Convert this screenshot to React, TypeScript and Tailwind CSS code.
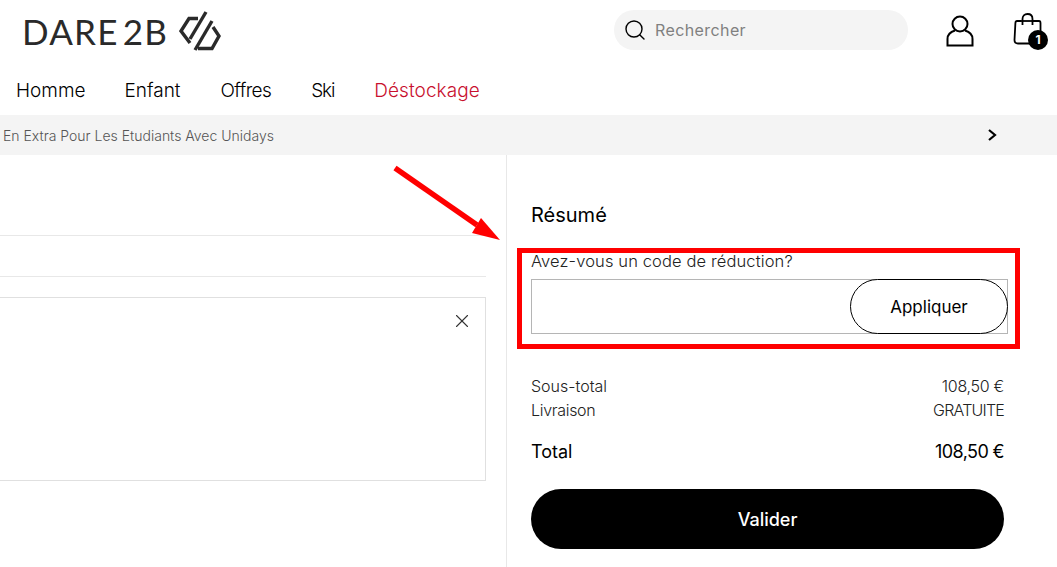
import { Search, X } from "lucide-react";

function LogoMark() {
  return (
    <svg width="42" height="40" viewBox="5 5 42 40" fill="none" stroke="#2a2a2a" strokeWidth="3.4">
      <path d="M24 12.5 L15 12.5 L7 25 L16 37" />
      <path d="M16 33 L32 6" />
      <path d="M21 44 L38 15" />
      <path d="M39 21 L45 30 L38 42.5 L24 42.5" />
    </svg>
  );
}

function UserIcon() {
  return (
    <svg width="28" height="32" viewBox="0 0 28 32" fill="none" stroke="#000" strokeWidth="2">
      <circle cx="14" cy="9" r="7.5" />
      <path d="M9 15.5 C4 17 1.5 20 1.5 24 L1.5 30.5 L26.5 30.5 L26.5 24 C26.5 20 24 17 19 15.5" />
    </svg>
  );
}

function BagIcon() {
  return (
    <div className="relative w-[36px] h-[36px]">
      <svg width="30" height="32" viewBox="0 0 30 32" fill="none" stroke="#000" strokeWidth="1.8">
        <path d="M20 8 L26 8 C27 8 27.5 9 27.5 10 L27.5 20" />
        <path d="M8 8 L4 8 C3 8 2.5 9 2.4 10 L1.5 27 C1.5 29 3 30.5 5 30.5 L17 30.5" />
        <path d="M8 8 L20 8" />
        <path d="M9.5 12 L9.5 6 C9.5 3 11.5 1 14.5 1 C17.5 1 19.5 3 19.5 6 L19.5 12" />
      </svg>
      <span className="absolute left-[15px] top-[17px] w-[20px] h-[20px] rounded-full bg-black text-white text-[12px] font-bold flex items-center justify-center">
        1
      </span>
    </div>
  );
}

export default function App() {
  return (
    <div className="relative w-[1057px] h-[567px] overflow-hidden bg-white text-black font-['Inter',sans-serif] font-light">
      <header className="h-[70px] flex items-center pl-[22px] pr-[8px]">
        <div className="w-[199px] flex items-center justify-between mt-[-8px]">
          <span className="font-['Lato',sans-serif] text-[35px] leading-none font-normal tracking-[1.2px] [word-spacing:-6px] text-[#2a2a2a]">DARE 2B</span>
          <LogoMark />
        </div>
        <div className="ml-[393px] mt-[-10px] w-[294px] h-[40px] rounded-full bg-[#f4f4f4] flex items-center pl-[9px] gap-[8px]">
          <Search size={24} strokeWidth={1.4} />
          <span className="text-[16px] font-normal text-[#808080] tracking-[0.4px]">Rechercher</span>
        </div>
        <div className="ml-auto flex items-center gap-[39px] mt-[-9px]">
          <UserIcon />
          <BagIcon />
        </div>
      </header>

      <nav className="h-[45px] flex items-center gap-[40px] pl-[16px] text-[19px] pb-[2px]">
        <span>Homme</span>
        <span className="ml-[-1px]">Enfant</span>
        <span className="tracking-[-0.6px]">Offres</span>
        <span className="tracking-[-1.2px]">Ski</span>
        <span className="text-[#c8102e] tracking-[0.1px]">Déstockage</span>
      </nav>

      <div className="h-[40px] bg-[#f4f4f4] flex items-center justify-between pl-[3px] pr-[60px] text-[14px] text-[#555]">
        <span>En Extra Pour Les Etudiants Avec Unidays</span>
        <svg width="10" height="14" viewBox="0 0 10 14" fill="none" stroke="#000" strokeWidth="2.2">
          <path d="M2 2 L8 7 L2 12" />
        </svg>
      </div>

      <main className="flex h-[412px]">
        <section className="w-[507px] border-r border-[#e8e8e8] pr-[20px]">
          <div className="h-[81px] border-b border-[#e8e8e8]" />
          <div className="h-[41px] border-b border-[#e8e8e8]" />
          <div className="mt-[20px] h-[184px] border border-l-0 border-[#e0e0e0] flex justify-end pt-[12px] pr-[12px]">
            <X size={22} strokeWidth={1.2} className="text-[#333]" />
          </div>
        </section>

        <section className="flex-1 pl-[24px] pr-[53px] pt-[47px]">
          <h2 className="text-[20px] leading-[26px] font-normal">Résumé</h2>
          <p className="mt-[21px] text-[16.5px] leading-[24px] tracking-[0.12px] text-[#222]">Avez-vous un code de réduction?</p>
          <div className="relative h-[55px] mt-[6px] mr-[-4px] flex">
            <div className="flex-1 border border-[#b5b5b5]" />
            <button className="absolute right-0 top-0 h-[55px] w-[158px] rounded-full border border-black bg-white text-[17px] font-normal pt-[2px]">
              Appliquer
            </button>
          </div>

          <div className="mt-[40px] flex justify-between text-[16px] leading-[24px] text-[#222]">
            <span>Sous-total</span>
            <span className="tracking-[-0.3px]">108,50 €</span>
          </div>
          <div className="flex justify-between text-[16px] leading-[24px] text-[#222]">
            <span className="tracking-[-0.3px]">Livraison</span>
            <span className="tracking-[-0.8px]">GRATUITE</span>
          </div>
          <div className="mt-[17px] flex justify-between text-[18px] leading-[26px] font-normal">
            <span>Total</span>
            <span className="tracking-[-0.6px]">108,50 €</span>
          </div>
          <button className="mt-[24px] w-full h-[60px] rounded-full bg-black text-white text-[18px] font-medium">
            Valider
          </button>
        </section>
      </main>

      {/* annotation over the page */}
      <div className="absolute left-[517px] top-[248px] w-[503px] h-[101px] border-[5px] border-[#ff0000] pointer-events-none" />
      <svg className="absolute left-[390px] top-[162px] pointer-events-none" width="115" height="84" viewBox="0 0 115 84">
        <path d="M5 6 L87 63" stroke="#ff0000" strokeWidth="5.5" />
        <path d="M91 56 L82 71 L110 78 Z" fill="#ff0000" />
      </svg>
    </div>
  );
}
